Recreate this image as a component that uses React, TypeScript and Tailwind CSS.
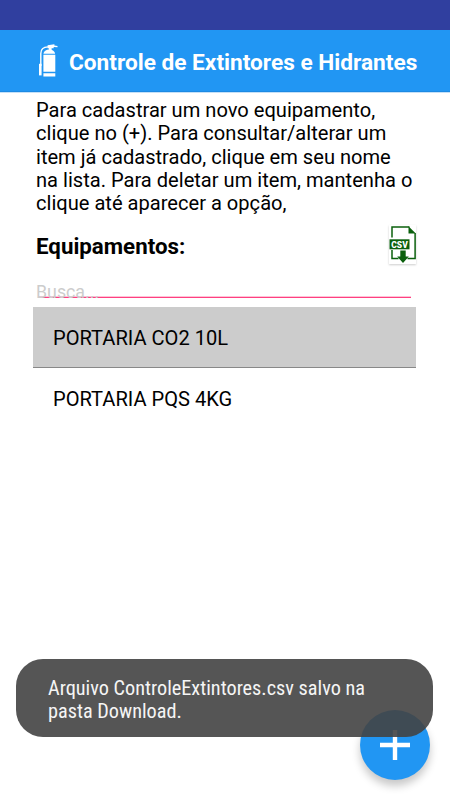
import React, { useState } from "react";

const helpText = [
  "Para cadastrar um novo equipamento,",
  "clique no (+). Para consultar/alterar um",
  "item já cadastrado, clique em seu nome",
  "na lista. Para deletar um item, mantenha o",
  "clique até aparecer a opção,",
];

const equipments = ["PORTARIA CO2 10L", "PORTARIA PQS 4KG"];

const ExtinguisherIcon: React.FC = () => (
  <svg width="20" height="34" viewBox="0 0 20 34" fill="none">
    <path d="M1.8 22V9.5C1.8 5.6 4.6 3 9 2.9" stroke="white" strokeWidth="1.4" />
    <path d="M0 19.8h2.6v11.6H0z" fill="white" />
    <path d="M8.6 1.3 15.4.2v1.2l3.1.6v1.3l-3.8-.4v1.3h-2.1v1.7H9.8V4.2H8.6z" fill="white" />
    <path d="M4.4 9.7C4.8 7.3 7 5.6 10.3 5.6s5.5 1.7 5.8 4.1z" fill="white" />
    <path d="M4.4 10.7h11.9v17H4.4zM4.4 29.2h11.9v3.3H4.4z" fill="white" />
  </svg>
);

const CsvIcon: React.FC = () => (
  <svg width="27" height="39" viewBox="0 0 27 39" fill="none">
    <path d="M3 12.5V2h17.5" stroke="#0b600d" strokeWidth="1.5" />
    <path d="M19.5 1.3 26.3 8v.5h-6.8z" fill="#0b600d" />
    <path d="M3 25v8.5h6.5M18.5 33.5h7.6V8" stroke="#0b600d" strokeWidth="1.5" />
    <path d="M.5 14.3h20v10H.5z" fill="#0b600d" />
    <text
      x="10.5"
      y="22.8"
      textAnchor="middle"
      fill="white"
      fontSize="9.8"
      fontWeight="900"
      fontFamily="Roboto, sans-serif"
      textLength="16.5"
      lengthAdjust="spacingAndGlyphs"
    >
      CSV
    </text>
    <path d="M11.3 25.6h5.4v5.8h3.1L14 38l-5.8-6.6h3.1z" fill="#0b600d" />
  </svg>
);

const App: React.FC = () => {
  const [search, setSearch] = useState("");

  return (
    <div className="relative flex h-[800px] w-[450px] flex-col overflow-hidden bg-white font-[Roboto,sans-serif] text-black">
      <div className="h-[30px] shrink-0 bg-[#303f9f]" />
      <header className="flex h-[62px] shrink-0 items-center border-b border-[#1c8ae4] bg-[#2196f3] pl-[39px] text-white shadow-[0_1px_0_#c5e0f7]">
        <ExtinguisherIcon />
        <h1 className="ml-[10px] pt-[4px] text-[22.65px] font-bold whitespace-nowrap">
          Controle de Extintores e Hidrantes
        </h1>
      </header>

      <main className="flex flex-col pr-[34px] pl-[33px]">
        <div className="pt-[7px] pl-[3px] text-[20.1px] leading-[23.3px] whitespace-nowrap">
          {helpText.map((line) => (
            <p key={line}>{line}</p>
          ))}
        </div>

        <div className="mt-[9.5px] flex h-[41px] justify-between">
          <h2 className="pt-[8px] pl-[3px] text-[22.3px] leading-[26px] font-bold">
            Equipamentos:
          </h2>
          <button className="h-[39px] w-[27px] bg-white shadow-[0_1px_2px_rgba(0,0,0,0.2)]">
            <CsvIcon />
          </button>
        </div>

        {/* the hint text overlaps the underline */}
        <div className="mt-[16px] h-[25px]">
          <input
            type="text"
            placeholder="Busca..."
            value={search}
            onChange={(e) => setSearch(e.target.value)}
            className="block h-[20px] w-full pl-[3px] text-[17.8px] leading-[20px] outline-none placeholder:text-[#cccccc]"
          />
          <div className="mx-[5px] -mt-[6px] h-[2px] border-t border-[#ffc2d6] bg-[#ff4081]" />
        </div>

        <ul className="text-[20.1px]">
          {equipments.map((name, index) => (
            <li
              key={name}
              className={
                index === 0
                  ? "flex h-[61px] items-center border-b border-[#888888] bg-[#cccccc] pt-[2px] pl-[20px]"
                  : "flex h-[61px] items-center pt-px pl-[20px]"
              }
            >
              {name}
            </li>
          ))}
        </ul>
      </main>

      <button className="absolute top-[710px] left-[360px] flex size-[70px] items-center justify-center rounded-full bg-[#2196f3] shadow-[0_6px_9px_rgba(0,0,0,0.22)]">
        <svg width="30" height="30" viewBox="0 0 30 30">
          <path d="M15 0v30M0 15h30" stroke="white" strokeWidth="4.4" />
        </svg>
      </button>

      {/* toast */}
      <div className="absolute top-[659px] left-[16px] flex h-[78px] w-[417px] items-center rounded-[27px] bg-[#434343]/90 pt-[4px] pl-[32px] font-['Roboto_Condensed',Roboto,sans-serif] text-[20.25px] leading-[23.4px] text-[#f5f5f5] [font-stretch:75%]">
        <p className="whitespace-nowrap">
          Arquivo ControleExtintores.csv salvo na
          <br />
          pasta Download.
        </p>
      </div>
    </div>
  );
};

export default App;
